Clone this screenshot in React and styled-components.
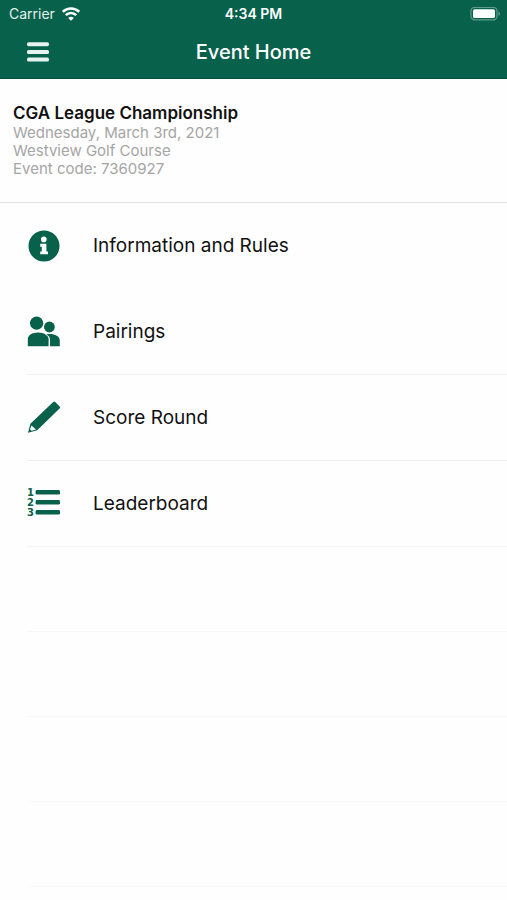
import React from "react";
import styled, { createGlobalStyle } from "styled-components";

const GlobalStyle = createGlobalStyle`
  * {
    box-sizing: border-box;
  }

  body {
    margin: 0;
    background-color: #fefefe;
    font-family: Inter, "Liberation Sans", sans-serif;
    color: #111;
  }
`;

const Page = styled.div`
  min-height: 100vh;
  display: flex;
  flex-direction: column;
`;

const Header = styled.header`
  background-color: #08614b;
  color: #fff;
  border-bottom: 1px solid #05533f;
`;

const StatusBar = styled.div`
  height: 28px;
  padding: 0 6px;
  display: grid;
  grid-template-columns: 1fr auto 1fr;
  align-items: center;
  font-size: 14px;
  line-height: 20px;
`;

const Carrier = styled.div`
  display: flex;
  align-items: center;
  gap: 7px;
  padding-left: 3px;
  color: #e3f0ec;
`;

const Clock = styled.div`
  font-weight: 600;
`;

const Battery = styled.svg`
  justify-self: end;
`;

const NavBar = styled.div`
  height: 50px;
  padding: 0 20px 2px;
  display: grid;
  grid-template-columns: 1fr auto 1fr;
  align-items: center;
`;

const MenuButton = styled.button`
  width: 36px;
  height: 36px;
  padding: 0;
  display: flex;
  align-items: center;
  justify-content: center;
  background: none;
  border: none;
  color: inherit;
  cursor: pointer;
`;

const Title = styled.h1`
  margin: 0;
  font-size: 20px;
  line-height: 28px;
  font-weight: 500;
`;

const EventInfo = styled.section`
  padding: 24px 13px;
  border-bottom: 1px solid #e2e2e2;
`;

const EventName = styled.h2`
  margin: 0;
  font-size: 17px;
  line-height: 21px;
  font-weight: 600;
`;

const EventDetail = styled.p`
  margin: 0;
  font-size: 15px;
  line-height: 18px;
  color: #a5a5a5;
`;

const Menu = styled.ul`
  margin: 0;
  padding: 0 0 0 27px;
  list-style: none;
`;

const MenuRow = styled.li`
  height: ${(props) => (props.$empty ? "85px" : "86px")};
  border-bottom: 1px solid ${(props) => props.$line};
`;

const MenuLink = styled.a`
  height: 100%;
  display: flex;
  align-items: center;
  gap: 32px;
  color: #111;
  font-size: 19px;
  line-height: 24px;
  text-decoration: none;
`;

const Icon = styled.svg`
  width: 34px;
  height: 34px;
  flex: none;
  fill: #08614b;
`;

const WifiIcon = () => (
  <svg width="18" height="14" viewBox="0 0 18 14" fill="none" stroke="#fff" strokeWidth="2.5">
    <path d="M0.8 4.8a11.6 11.6 0 0 1 16.4 0" />
    <path d="M3.8 8.2a7.3 7.3 0 0 1 10.4 0" />
    <path d="M9 13.8 6.2 11a4 4 0 0 1 5.6 0z" fill="#fff" stroke="none" />
  </svg>
);

const BatteryIcon = () => (
  <Battery width="31" height="14" viewBox="0 0 31 14">
    <rect x="1" y="0.4" width="26" height="12.4" rx="3.6" fill="none" stroke="#5f9b8b" strokeWidth="1.2" />
    <rect x="3" y="2.2" width="22" height="8.8" rx="1.6" fill="#fff" />
    <path d="M28.5 4.4c2 .7 2 3.7 0 4.4z" fill="#5f9b8b" />
  </Battery>
);

const InfoIcon = () => (
  <Icon viewBox="0 0 34 34">
    <circle cx="17" cy="17" r="15.5" />
    <circle cx="16.8" cy="10.4" r="2.8" fill="#fff" />
    <path d="M13.2 14.8h6.2v7.6h1.6v2.9h-7.8v-2.9h1.6v-4.7h-1.6z" fill="#fff" />
  </Icon>
);

const PairingsIcon = () => (
  <Icon viewBox="0 0 34 34">
    <circle cx="9.6" cy="8.2" r="6.6" />
    <circle cx="22.4" cy="12" r="5.4" />
    <path d="M0.8 31.2v-7.4c0-3.6 4.4-6.4 10.2-6.4s10.6 2.8 10.6 6.8v7z" />
    <path d="M19.4 19.4c6.8-1.2 13.4 1.4 13.4 6v5.8h-9.8v-7c0-2-1.4-3.6-3.6-4.8z" />
  </Icon>
);

const PencilIcon = () => (
  <Icon viewBox="0 0 34 34">
    <path d="M26.2 1c.7-.7 1.3-.7 2 0l4.4 4.4c.6.7.6 1.3 0 2L10.2 29.2 1 31.8l2.4-9z" />
    <path d="M4.4 24.6 9 28.6l-4.4 1.2-1.6-1.2z" fill="#fff" />
  </Icon>
);

const LeaderboardIcon = () => (
  <Icon viewBox="0 0 34 34">
    <g fontFamily="DejaVu Sans" fontWeight="700" fontSize="10" aria-hidden="true">
      <text x="0" y="9">1</text>
      <text x="0" y="19">2</text>
      <text x="0" y="29">3</text>
    </g>
    <rect x="8.6" y="3" width="24.4" height="4.6" rx="1.4" />
    <rect x="8.6" y="13" width="24.4" height="4.6" rx="1.4" />
    <rect x="8.6" y="23" width="24.4" height="4.6" rx="1.4" />
  </Icon>
);

const items = [
  { label: "Information and Rules", href: "#information", icon: <InfoIcon />, line: "transparent" },
  { label: "Pairings", href: "#pairings", icon: <PairingsIcon />, line: "#f0f0f0" },
  { label: "Score Round", href: "#score", icon: <PencilIcon />, line: "#f0f0f0" },
  { label: "Leaderboard", href: "#leaderboard", icon: <LeaderboardIcon />, line: "#f5f5f5" },
];

const emptyLines = ["#f7f7f7", "#f7f7f7", "#fafafa", "#fafafa"];

const App = () => {
  return (
    <>
      <GlobalStyle />
      <Page>
        <Header>
          <StatusBar>
            <Carrier>
              Carrier
              <WifiIcon />
            </Carrier>
            <Clock>4:34 PM</Clock>
            <BatteryIcon />
          </StatusBar>
          <NavBar>
            <MenuButton aria-label="Menu">
              <svg width="24" height="24" viewBox="0 0 24 24" fill="#e6f2ee">
                <rect x="1" y="2.2" width="22" height="4" rx="1.6" />
                <rect x="1" y="10" width="22" height="4" rx="1.6" />
                <rect x="1" y="17.6" width="22" height="4" rx="1.6" />
              </svg>
            </MenuButton>
            <Title>Event Home</Title>
          </NavBar>
        </Header>
        <EventInfo>
          <EventName>CGA League Championship</EventName>
          <EventDetail>Wednesday, March 3rd, 2021</EventDetail>
          <EventDetail>Westview Golf Course</EventDetail>
          <EventDetail>Event code: 7360927</EventDetail>
        </EventInfo>
        <nav>
          <Menu>
            {items.map((item) => (
              <MenuRow key={item.label} $line={item.line}>
                <MenuLink href={item.href}>
                  {item.icon}
                  {item.label}
                </MenuLink>
              </MenuRow>
            ))}
            {emptyLines.map((line, i) => (
              <MenuRow key={i} $empty $line={line} aria-hidden="true" />
            ))}
          </Menu>
        </nav>
      </Page>
    </>
  );
};

export default App;
